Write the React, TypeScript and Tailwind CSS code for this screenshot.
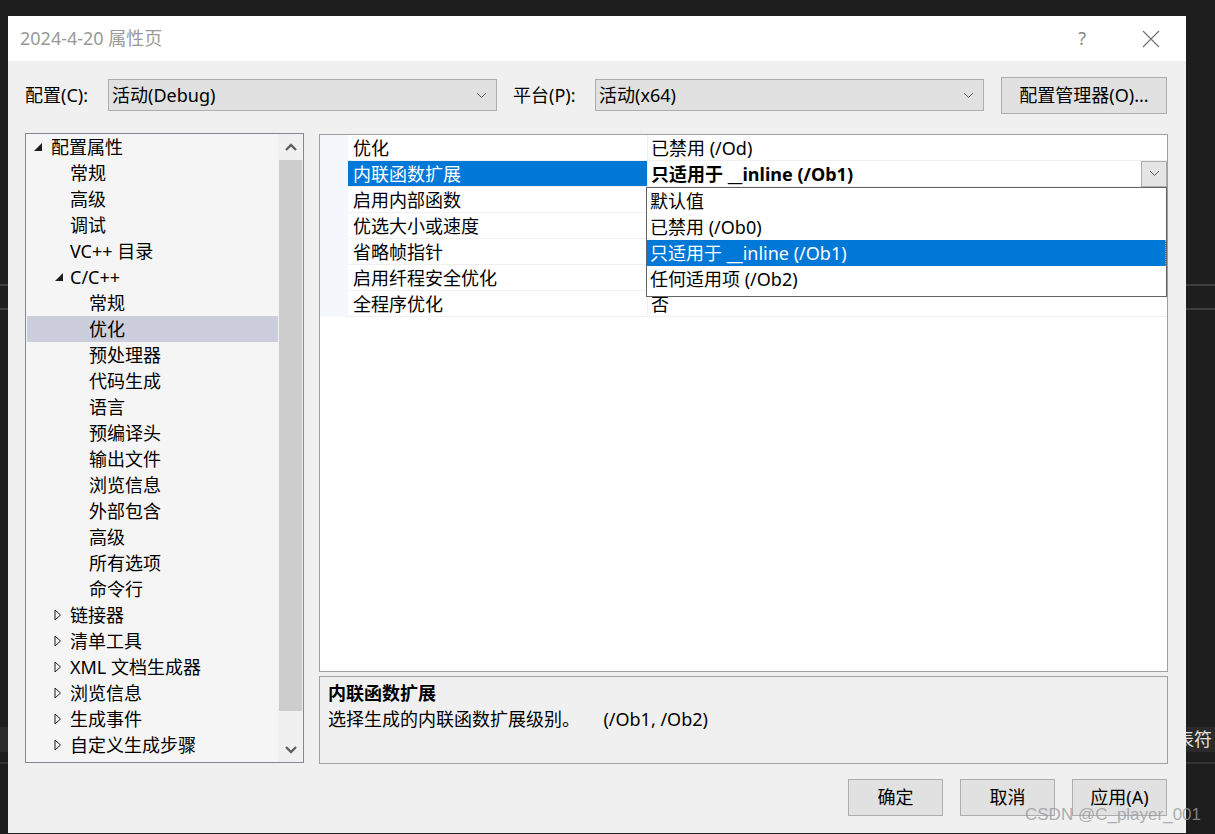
import React from "react";

const font = "font-['Noto_Sans','Noto_Sans_CJK_SC',sans-serif]";

type TreeItem = {
  label: string;
  level: 0 | 1 | 2;
  arrow?: "open" | "closed";
  selected?: boolean;
};

const tree: TreeItem[] = [
  { label: "配置属性", level: 0, arrow: "open" },
  { label: "常规", level: 1 },
  { label: "高级", level: 1 },
  { label: "调试", level: 1 },
  { label: "VC++ 目录", level: 1 },
  { label: "C/C++", level: 1, arrow: "open" },
  { label: "常规", level: 2 },
  { label: "优化", level: 2, selected: true },
  { label: "预处理器", level: 2 },
  { label: "代码生成", level: 2 },
  { label: "语言", level: 2 },
  { label: "预编译头", level: 2 },
  { label: "输出文件", level: 2 },
  { label: "浏览信息", level: 2 },
  { label: "外部包含", level: 2 },
  { label: "高级", level: 2 },
  { label: "所有选项", level: 2 },
  { label: "命令行", level: 2 },
  { label: "链接器", level: 1, arrow: "closed" },
  { label: "清单工具", level: 1, arrow: "closed" },
  { label: "XML 文档生成器", level: 1, arrow: "closed" },
  { label: "浏览信息", level: 1, arrow: "closed" },
  { label: "生成事件", level: 1, arrow: "closed" },
  { label: "自定义生成步骤", level: 1, arrow: "closed" },
];

const props = [
  { name: "优化", value: "已禁用 (/Od)" },
  { name: "内联函数扩展", value: "只适用于 __inline (/Ob1)", active: true },
  { name: "启用内部函数", value: "" },
  { name: "优选大小或速度", value: "" },
  { name: "省略帧指针", value: "" },
  { name: "启用纤程安全优化", value: "" },
  { name: "全程序优化", value: "否" },
];

const options = [
  "默认值",
  "已禁用 (/Ob0)",
  "只适用于 __inline (/Ob1)",
  "任何适用项 (/Ob2)",
];

function SmallChevron() {
  return (
    <svg width="11" height="7" viewBox="0 0 11 7" className="shrink-0">
      <path d="M1 1 L5.5 5.5 L10 1" fill="none" stroke="#606060" strokeWidth="1" />
    </svg>
  );
}

function Combo({ text, width }: { text: string; width: string }) {
  return (
    <div
      className={`${width} h-[32px] bg-[#e1e1e1] border border-[#adadad] flex items-center justify-between pl-[3px] pr-[9px]`}
    >
      <span className="text-[18px] leading-[26px] text-black">{text}</span>
      <SmallChevron />
    </div>
  );
}

function WinButton({ label, width = "w-[95px]" }: { label: string; width?: string }) {
  return (
    <div
      className={`${width} h-[37px] bg-[#e1e1e1] border border-[#adadad] flex items-center justify-center text-[18px] text-black`}
    >
      {label}
    </div>
  );
}

function TreeArrow({ kind }: { kind: "open" | "closed" }) {
  if (kind === "open") {
    return (
      <svg width="10" height="10" viewBox="0 0 10 10">
        <path d="M9 1 L9 9 L1 9 Z" fill="#1e1e1e" />
      </svg>
    );
  }
  return (
    <svg width="8" height="12" viewBox="0 0 8 12">
      <path d="M1 1 L6.5 6 L1 11 Z" fill="none" stroke="#1e1e1e" strokeWidth="1" />
    </svg>
  );
}

function Tree() {
  const textPad = { 0: "pl-[24px]", 1: "pl-[43px]", 2: "pl-[62px]" } as const;
  const arrowPos = { 0: "left-[6px]", 1: "left-[27px]", 2: "left-[46px]" } as const;
  return (
    <div className="w-[279px] h-[630px] border border-[#828790] bg-[#f5f5f5] flex">
      <div className="flex-1 pl-[1px]">
        {tree.map((t, i) => (
          <div
            key={i}
            className={`relative h-[26px] flex items-center ${textPad[t.level]} ${
              t.selected ? "bg-[#cccedb]" : ""
            }`}
          >
            {t.arrow && (
              <span className={`absolute ${arrowPos[t.level]} top-0 h-[26px] flex items-center`}>
                <TreeArrow kind={t.arrow} />
              </span>
            )}
            <span className="text-[18px] leading-[26px] text-black whitespace-nowrap">
              {t.label}
            </span>
          </div>
        ))}
      </div>
      <div className="w-[25px] bg-[#f0f0f0] flex flex-col">
        <div className="h-[26px] flex items-center justify-center">
          <svg width="12" height="8" viewBox="0 0 12 8">
            <path d="M1 7 L6 2 L11 7" fill="none" stroke="#606060" strokeWidth="2.4" />
          </svg>
        </div>
        <div className="h-[551px] mx-[1px] bg-[#cdcdcd]" />
        <div className="flex-1 flex items-end justify-center pb-[8px]">
          <svg width="12" height="8" viewBox="0 0 12 8">
            <path d="M1 1 L6 6 L11 1" fill="none" stroke="#606060" strokeWidth="2.4" />
          </svg>
        </div>
      </div>
    </div>
  );
}

function PropertyGrid() {
  return (
    <div className="relative h-[538px] border border-[#a0a0a0] bg-white">
      {props.map((p, i) => (
        <div key={i} className="h-[26px] flex">
          <div className="w-[28px] bg-[#f4f7fc]" />
          <div
            className={`w-[299px] pl-[5px] flex items-center border-b border-[#f0f0f0] ${
              p.active ? "bg-[#0078d7] text-white" : "text-black"
            }`}
          >
            <span className="text-[18px] leading-[26px] whitespace-nowrap">{p.name}</span>
          </div>
          <div className="flex-1 border-l border-b border-[#f0f0f0] pl-[3px] flex items-center justify-between">
            <span
              className={`text-[18px] leading-[26px] text-black whitespace-nowrap ${
                p.active ? "font-bold" : ""
              }`}
            >
              {p.value}
            </span>
            {p.active && (
              <div className="w-[26px] h-[26px] bg-[#e5e5e5] border border-[#adadad] flex items-center justify-center">
                <SmallChevron />
              </div>
            )}
          </div>
        </div>
      ))}

      {/* open value list */}
      <div className="absolute left-[326px] top-[52px] w-[521px] h-[110px] border border-[#646464] bg-white">
        {options.map((o, i) => (
          <div
            key={i}
            className={`h-[26px] pl-[3px] flex items-center ${
              i === 2 ? "bg-[#0078d7] text-white border-r border-dotted border-[#e0a050]" : "text-black"
            }`}
          >
            <span className="text-[18px] leading-[26px] whitespace-nowrap">{o}</span>
          </div>
        ))}
      </div>
    </div>
  );
}

export default function App() {
  return (
    <div className={`relative w-[1215px] h-[834px] bg-[#1e1e1e] overflow-hidden ${font}`}>
      {/* IDE behind the dialog */}
      <div className="absolute left-0 right-0 top-[284px] h-[2px] bg-[#3d3d3d]" />
      <div className="absolute left-0 right-0 top-[308px] h-[2px] bg-[#3d3d3d]" />
      <div className="absolute left-0 right-0 top-[727px] h-[25px] bg-[#2a2a2a]" />
      <div className="absolute left-0 right-0 top-[762px] h-[2px] bg-[#333333]" />
      <div className="absolute left-[1176px] top-[727px] h-[25px] flex items-center text-[18px] text-[#e0e0e0] whitespace-nowrap">
        表符
      </div>

      <div className="absolute left-[8px] top-[16px] w-[1178px] h-[817px] flex flex-col bg-[#f0f0f0]">
        {/* title bar */}
        <div className="h-[45px] bg-white flex items-center pl-[12px] pr-[26px]">
          <span className="flex-1 text-[18px] text-[#999999]">2024-4-20 属性页</span>
          <span className="text-[18px] text-[#8a8a8a] mr-[56px]">?</span>
          <svg width="18" height="18" viewBox="0 0 18 18">
            <path d="M1 1 L17 17 M17 1 L1 17" stroke="#707070" strokeWidth="1.1" />
          </svg>
        </div>

        <div className="flex-1 pl-[17px] pt-[16px]">
          {/* configuration row */}
          <div className="h-[36px] flex items-center">
            <span className="w-[83px] text-[18px] text-black">配置(C):</span>
            <Combo text="活动(Debug)" width="w-[389px]" />
            <span className="ml-[16px] w-[82px] text-[18px] text-black">平台(P):</span>
            <Combo text="活动(x64)" width="w-[389px]" />
            <div className="ml-[17px]">
              <WinButton label="配置管理器(O)..." width="w-[166px]" />
            </div>
          </div>

          {/* main */}
          <div className="mt-[20px] flex">
            <Tree />
            <div className="ml-[15px] w-[849px] pt-[1px] flex flex-col">
              <PropertyGrid />
              <div className="mt-[4px] h-[88px] border border-[#a0a0a0] bg-[#f0f0f0] pl-[8px] pt-[3px]">
                <div className="text-[18px] leading-[26px] font-bold text-black">内联函数扩展</div>
                <div className="text-[18px] leading-[26px] text-black whitespace-pre">
                  {"选择生成的内联函数扩展级别。     (/Ob1, /Ob2)"}
                </div>
              </div>
            </div>
          </div>

          {/* buttons */}
          <div className="mt-[15px] pr-[19px] flex justify-end gap-[17px]">
            <WinButton label="确定" />
            <WinButton label="取消" />
            <WinButton label="应用(A)" />
          </div>
        </div>
      </div>

      <div className="absolute left-[1025px] top-[803px] text-[17px] leading-[24px] text-[#9a9a9a]/80 font-['Liberation_Sans',sans-serif] whitespace-nowrap">
        CSDN @C_player_001
      </div>
    </div>
  );
}
